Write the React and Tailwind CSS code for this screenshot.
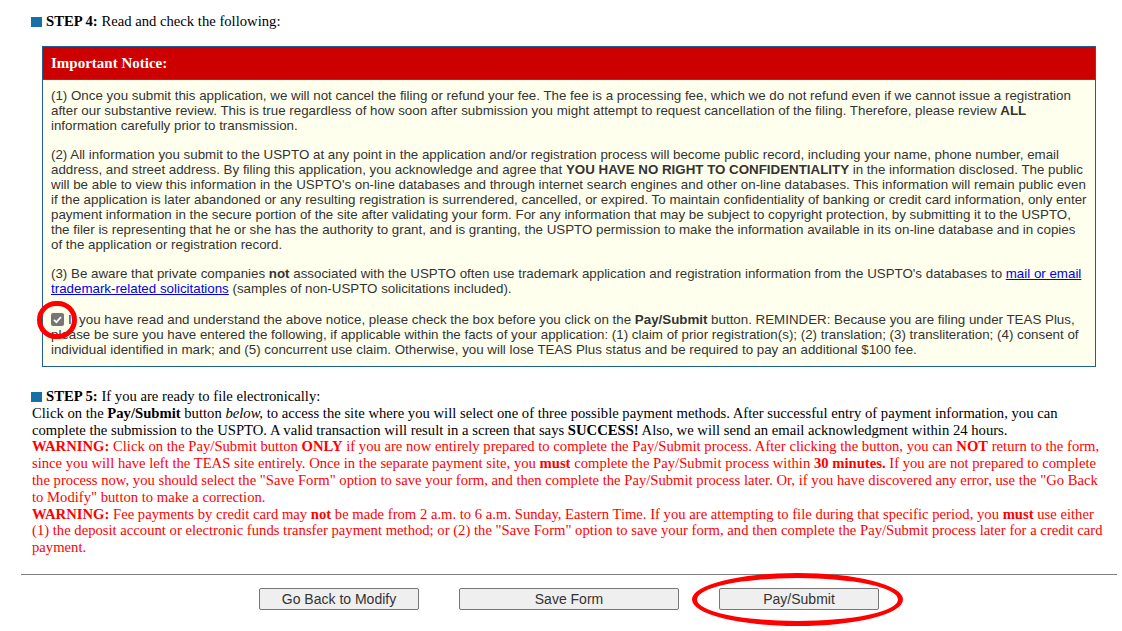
import React from 'react';

const serif = "font-['Liberation_Serif','Times_New_Roman',serif]";
const sans = "font-['Liberation_Sans',Arial,sans-serif]";

function StepMark() {
  return <span className="inline-block w-[11px] h-[10px] bg-[#1570a6] mr-[4px] align-[-1px]" />;
}

function Checkbox() {
  return (
    <span className="relative inline-block w-[13px] h-[13px] rounded-[2px] bg-[#767676] align-[-2px] mr-[4px]">
      <svg viewBox="0 0 13 13" className="absolute inset-0 w-[13px] h-[13px]">
        <path d="M3 6.8 L5.4 9.2 L10 4" fill="none" stroke="#fff" strokeWidth="1.8" />
      </svg>
      {/* red highlight circle */}
      <span className="absolute left-[-14px] top-[-12px] w-[40px] h-[38px] rounded-full border-[5px] border-[#ff0000]" />
    </span>
  );
}

export default function App() {
  return (
    <div className="w-[1122px] h-[631px] bg-white overflow-hidden relative">
      {/* STEP 4 */}
      <div className={`${serif} text-[14.67px] text-black pl-[31px] pt-[13px] leading-[17px]`}>
        <StepMark />
        <b>STEP 4:</b> Read and check the following:
      </div>

      {/* Important notice */}
      <div className="ml-[42px] mt-[16px] w-[1054px] border border-[#1d5f8f] bg-[#ffffee]">
        <div className={`${serif} bg-[#cc0000] text-white font-bold text-[15px] h-[33px] flex items-center pl-[8px] border-b border-[#1d5f8f]`}>
          Important Notice:
        </div>
        <div className={`${sans} text-[13.33px] leading-[15px] text-[#333] px-[8px] pt-[8px] pb-[9px] flex flex-col gap-[14px]`}>
          <p>
            (1) Once you submit this application, we will not cancel the filing or refund your fee. The fee is a processing fee, which we do not refund even if we cannot issue a registration after our substantive review. This is true regardless of how soon after submission you might attempt to request cancellation of the filing. Therefore, please review <b>ALL</b> information carefully prior to transmission.
          </p>
          <p>
            (2) All information you submit to the USPTO at any point in the application and/or registration process will become public record, including your name, phone number, email address, and street address. By filing this application, you acknowledge and agree that <b>YOU HAVE NO RIGHT TO CONFIDENTIALITY</b> in the information disclosed. The public will be able to view this information in the USPTO's on-line databases and through internet search engines and other on-line databases. This information will remain public even if the application is later abandoned or any resulting registration is surrendered, cancelled, or expired. To maintain confidentiality of banking or credit card information, only enter payment information in the secure portion of the site after validating your form. For any information that may be subject to copyright protection, by submitting it to the USPTO, the filer is representing that he or she has the authority to grant, and is granting, the USPTO permission to make the information available in its on-line database and in copies of the application or registration record.
          </p>
          <p>
            (3) Be aware that private companies <b>not</b> associated with the USPTO often use trademark application and registration information from the USPTO's databases to{' '}
            <a className="text-[#0000ee] underline">mail or email trademark-related solicitations</a> (samples of non-USPTO solicitations included).
          </p>
          <p className="mt-[2px]">
            <Checkbox />
            If you have read and understand the above notice, please check the box before you click on the <b>Pay/Submit</b> button. REMINDER: Because you are filing under TEAS Plus, please be sure you have entered the following, if applicable within the facts of your application: (1) claim of prior registration(s); (2) translation; (3) transliteration; (4) consent of individual identified in mark; and (5) concurrent use claim. Otherwise, you will lose TEAS Plus status and be required to pay an additional $100 fee.
          </p>
        </div>
      </div>

      {/* STEP 5 */}
      <div className={`${serif} text-[14.67px] leading-[16.8px] text-black pl-[31px] mt-[21px] w-[1104px]`}>
        <div>
          <StepMark />
          <b>STEP 5:</b> If you are ready to file electronically:
        </div>
        <div className="pl-[1px]">
          <p>
            Click on the <b>Pay/Submit</b> button <i>below,</i> to access the site where you will select one of three possible payment methods. After successful entry of payment information, you can complete the submission to the USPTO. A valid transaction will result in a screen that says <b>SUCCESS!</b> Also, we will send an email acknowledgment within 24 hours.
          </p>
          <p className="text-[#ff0000]">
            <b>WARNING:</b> Click on the Pay/Submit button <b>ONLY</b> if you are now entirely prepared to complete the Pay/Submit process. After clicking the button, you can <b>NOT</b> return to the form, since you will have left the TEAS site entirely. Once in the separate payment site, you <b>must</b> complete the Pay/Submit process within <b>30 minutes.</b> If you are not prepared to complete the process now, you should select the "Save Form" option to save your form, and then complete the Pay/Submit process later. Or, if you have discovered any error, use the "Go Back to Modify" button to make a correction.
          </p>
          <p className="text-[#ff0000]">
            <b>WARNING:</b> Fee payments by credit card may <b>not</b> be made from 2 a.m. to 6 a.m. Sunday, Eastern Time. If you are attempting to file during that specific period, you <b>must</b> use either (1) the deposit account or electronic funds transfer payment method; or (2) the "Save Form" option to save your form, and then complete the Pay/Submit process later for a credit card payment.
          </p>
        </div>
      </div>

      {/* Divider + buttons */}
      <div className="ml-[21px] w-[1096px] mt-[18px] border-t border-[#808080]" />
      <div className={`${sans} ml-[21px] w-[1096px] mt-[13px] flex justify-center gap-[40px] text-[14px] text-[#333]`}>
        <button className="w-[160px] h-[22px] bg-[#efefef] border border-[#767676] rounded-[2px]">Go Back to Modify</button>
        <button className="w-[220px] h-[22px] bg-[#efefef] border border-[#767676] rounded-[2px]">Save Form</button>
        <div className="relative">
          <button className="w-[160px] h-[22px] bg-[#efefef] border border-[#767676] rounded-[2px]">Pay/Submit</button>
          <span className="absolute left-[-27px] top-[-15px] w-[211px] h-[53px] rounded-[50%] border-[5px] border-[#ff0000] pointer-events-none" />
        </div>
      </div>
    </div>
  );
}
